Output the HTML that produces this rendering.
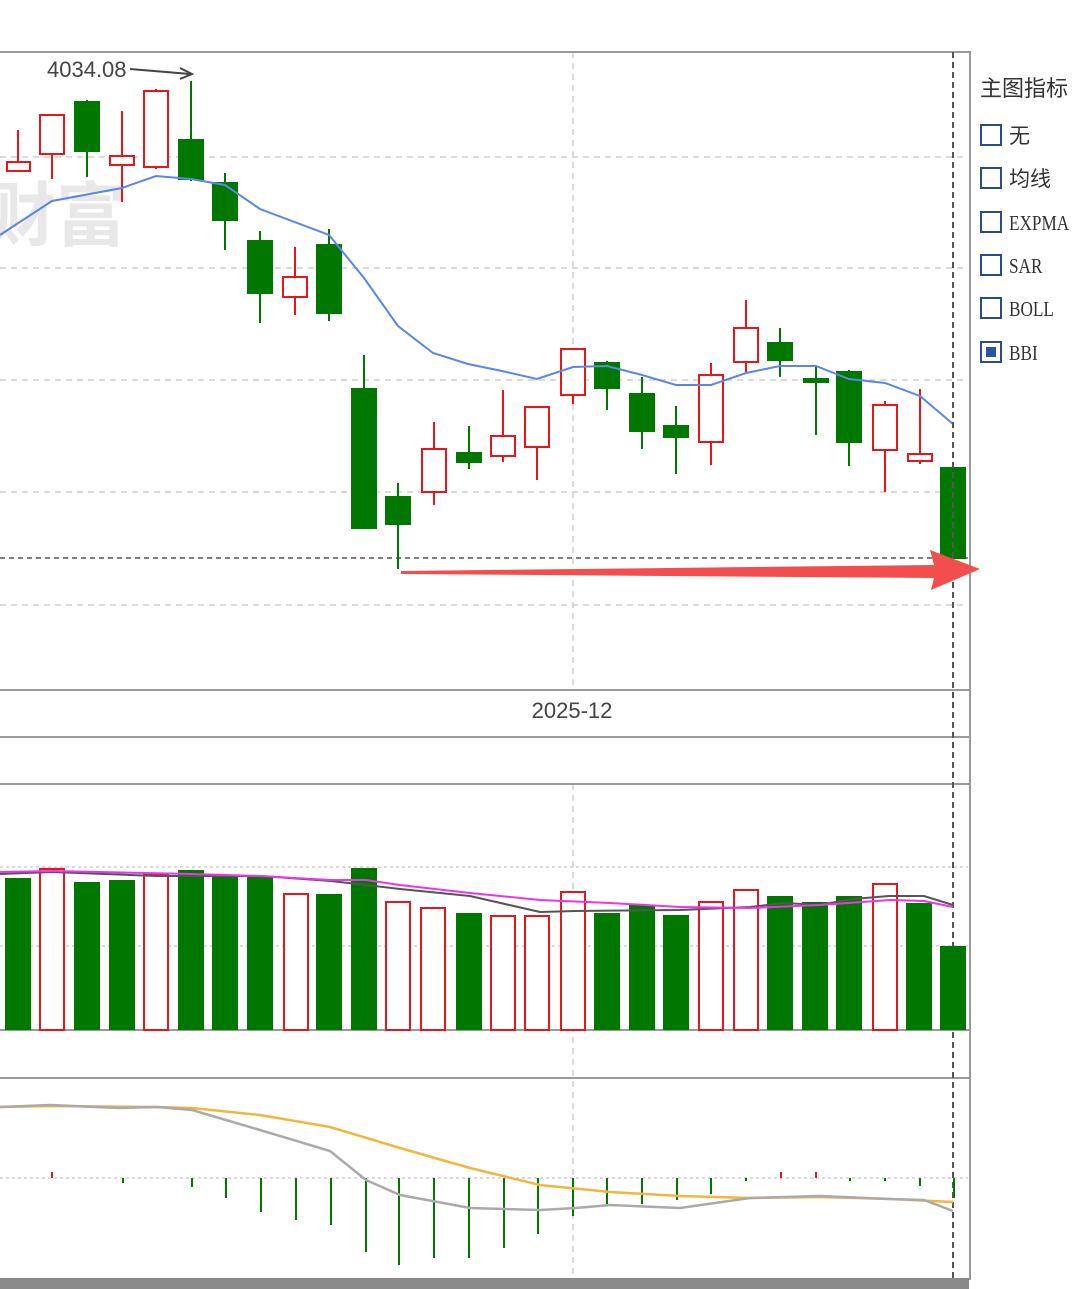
<!DOCTYPE html>
<html><head><meta charset="utf-8"><style>
html,body{margin:0;padding:0;background:#fff;width:1080px;height:1289px;overflow:hidden}
svg{display:block}
</style></head><body>
<svg width="1080" height="1289" viewBox="0 0 1080 1289" xmlns="http://www.w3.org/2000/svg">
<rect width="1080" height="1289" fill="#fff"/>
<!-- watermark -->
<text x="-14" y="240" font-family="'Liberation Sans','Noto Sans CJK SC',sans-serif" font-size="70" font-weight="bold" fill="#e8e8e8">财富</text>
<!-- grid main -->
<g stroke="#cfcfcf" stroke-width="1.5" stroke-dasharray="6,5">
<line x1="0" y1="157" x2="968" y2="157"/><line x1="0" y1="268" x2="968" y2="268"/>
<line x1="0" y1="380" x2="968" y2="380"/><line x1="0" y1="492" x2="968" y2="492"/>
<line x1="0" y1="605" x2="968" y2="605"/>
<line x1="573" y1="52" x2="573" y2="689"/><line x1="573" y1="784" x2="573" y2="1278"/>
<line x1="0" y1="867" x2="968" y2="867" stroke-dasharray="3,3"/><line x1="0" y1="946" x2="968" y2="946" stroke-dasharray="3,3"/>
<line x1="0" y1="1178" x2="968" y2="1178" stroke-dasharray="3,3"/>
</g>
<line x1="0" y1="558" x2="968" y2="558" stroke="#555" stroke-width="1.5" stroke-dasharray="5,4"/>
<!-- frames -->
<g stroke="#9a9a9a" stroke-width="2" fill="none">
<line x1="0" y1="52" x2="970" y2="52"/><line x1="970" y1="51" x2="970" y2="1280"/>
<line x1="0" y1="690" x2="970" y2="690"/><line x1="0" y1="737" x2="970" y2="737"/>
<line x1="0" y1="784" x2="970" y2="784"/><line x1="0" y1="1030" x2="970" y2="1030"/>
<line x1="0" y1="1078" x2="970" y2="1078"/>
</g>
<rect x="0" y="1278" width="969" height="11" fill="#8a8a8a"/>
<text x="572" y="718" text-anchor="middle" font-family="'Liberation Sans',sans-serif" font-size="22" fill="#444">2025-12</text>
<!-- annotation -->
<text x="47" y="77" font-family="'Liberation Sans',sans-serif" font-size="22" fill="#444">4034.08</text>
<line x1="130" y1="69" x2="190" y2="74" stroke="#444" stroke-width="2"/>
<path d="M180 68 L192 74 L180 79" fill="none" stroke="#444" stroke-width="2"/>
<!-- candles -->
<g stroke-width="2">
<g stroke="#e8161b" fill="#fff">
<line x1="18" y1="130" x2="18" y2="172"/><rect x="7" y="162" width="23" height="9"/>
<line x1="52" y1="115" x2="52" y2="179"/><rect x="40" y="115" width="24" height="39"/>
<line x1="122" y1="111" x2="122" y2="202"/><rect x="110" y="156" width="24" height="9"/>
<line x1="156" y1="89" x2="156" y2="169"/><rect x="144" y="91" width="24" height="76"/>
<line x1="295" y1="247" x2="295" y2="315"/><rect x="283" y="277" width="24" height="20"/>
<line x1="434" y1="422" x2="434" y2="505"/><rect x="422" y="449" width="24" height="43"/>
<line x1="503" y1="390" x2="503" y2="462"/><rect x="491" y="436" width="24" height="20"/>
<line x1="537" y1="407" x2="537" y2="480"/><rect x="525" y="407" width="24" height="40"/>
<line x1="573" y1="349" x2="573" y2="404"/><rect x="561" y="349" width="24" height="46"/>
<line x1="711" y1="363" x2="711" y2="465"/><rect x="699" y="375" width="24" height="67"/>
<line x1="746" y1="300" x2="746" y2="372"/><rect x="734" y="328" width="24" height="34"/>
<line x1="885" y1="401" x2="885" y2="492"/><rect x="873" y="405" width="24" height="45"/>
<line x1="920" y1="389" x2="920" y2="464"/><rect x="908" y="454" width="24" height="7"/>
</g>
<g stroke="#007800" fill="#007800">
<line x1="87" y1="100" x2="87" y2="177"/><rect x="75" y="102" width="24" height="49"/>
<line x1="191" y1="81" x2="191" y2="181"/><rect x="179" y="140" width="24" height="39"/>
<line x1="225" y1="173" x2="225" y2="250"/><rect x="213" y="183" width="24" height="37"/>
<line x1="260" y1="231" x2="260" y2="323"/><rect x="248" y="241" width="24" height="52"/>
<line x1="329" y1="229" x2="329" y2="321"/><rect x="317" y="245" width="24" height="68"/>
<line x1="364" y1="355" x2="364" y2="528"/><rect x="352" y="389" width="24" height="139"/>
<line x1="398" y1="483" x2="398" y2="569"/><rect x="386" y="497" width="24" height="27"/>
<line x1="469" y1="426" x2="469" y2="469"/><rect x="457" y="453" width="24" height="9"/>
<line x1="607" y1="361" x2="607" y2="410"/><rect x="595" y="363" width="24" height="25"/>
<line x1="642" y1="377" x2="642" y2="449"/><rect x="630" y="394" width="24" height="37"/>
<line x1="676" y1="406" x2="676" y2="474"/><rect x="664" y="426" width="24" height="11"/>
<line x1="780" y1="328" x2="780" y2="377"/><rect x="768" y="343" width="24" height="17"/>
<line x1="816" y1="367" x2="816" y2="435"/><rect x="804" y="379" width="24" height="3"/>
<line x1="849" y1="370" x2="849" y2="466"/><rect x="837" y="372" width="24" height="70"/>
<rect x="941" y="468" width="24" height="90"/>
</g>
</g>
<!-- BBI -->
<polyline fill="none" stroke="#5b86e6" stroke-width="2" points="0,235 52,201 122,188 156,176 191,179 225,185 260,209 329,235 364,278 398,326 433,353 468,364 502,371 537,379 573,367 607,366 642,375 676,385 711,385 746,373 780,366 816,366 849,379 885,383 920,396 953,424"/>
<!-- crosshair -->
<line x1="953" y1="52" x2="953" y2="1278" stroke="#555" stroke-width="2" stroke-dasharray="6,4"/>
<!-- red arrow -->
<polygon fill="#f24e4e" points="401,571 934,565 930,550 980,569 931,590 934,578 401,574"/>
<!-- volume bars -->
<g stroke-width="2">
<g fill="#007800">
<rect x="5" y="878" width="26" height="152"/><rect x="74" y="882" width="26" height="148"/>
<rect x="109" y="880" width="26" height="150"/><rect x="178" y="870" width="26" height="160"/>
<rect x="212" y="876" width="26" height="154"/><rect x="247" y="876" width="26" height="154"/>
<rect x="316" y="894" width="26" height="136"/><rect x="351" y="868" width="26" height="162"/>
<rect x="456" y="913" width="26" height="117"/><rect x="594" y="913" width="26" height="117"/>
<rect x="629" y="905" width="26" height="125"/><rect x="663" y="915" width="26" height="115"/>
<rect x="767" y="896" width="26" height="134"/><rect x="802" y="902" width="26" height="128"/>
<rect x="836" y="896" width="26" height="134"/><rect x="906" y="903" width="26" height="127"/>
<rect x="940" y="946" width="26" height="84"/>
</g>
<g fill="#fff" stroke="#e8161b">
<rect x="40" y="869" width="24" height="161"/><rect x="144" y="874" width="24" height="156"/>
<rect x="284" y="894" width="24" height="136"/><rect x="386" y="902" width="24" height="128"/>
<rect x="421" y="908" width="24" height="122"/><rect x="491" y="916" width="24" height="114"/>
<rect x="525" y="916" width="24" height="114"/><rect x="561" y="892" width="24" height="138"/>
<rect x="699" y="902" width="24" height="128"/><rect x="734" y="890" width="24" height="140"/>
<rect x="873" y="884" width="24" height="146"/>
</g>
</g>
<polyline fill="none" stroke="#555" stroke-width="2" points="0,874 52,872 157,876 226,876 261,876 331,881 366,885 400,889 470,896 540,912 576,911 680,910 750,907 784,903 819,905 853,899 889,896 924,896 953,905"/>
<polyline fill="none" stroke="#ee33ee" stroke-width="2" points="0,872 52,871 192,874 260,876 330,880 366,880 400,885 470,893 540,900 610,903 680,907 750,908 820,905 890,900 924,901 953,907"/>
<!-- MACD hist -->
<g stroke="#007800" stroke-width="2">
<line x1="123" y1="1178" x2="123" y2="1183"/><line x1="192" y1="1178" x2="192" y2="1187"/>
<line x1="226" y1="1178" x2="226" y2="1198"/><line x1="261" y1="1178" x2="261" y2="1212"/>
<line x1="296" y1="1178" x2="296" y2="1220"/><line x1="331" y1="1178" x2="331" y2="1225"/>
<line x1="366" y1="1178" x2="366" y2="1252"/><line x1="399" y1="1178" x2="399" y2="1265"/>
<line x1="434" y1="1178" x2="434" y2="1258"/><line x1="469" y1="1178" x2="469" y2="1258"/>
<line x1="504" y1="1178" x2="504" y2="1248"/><line x1="538" y1="1178" x2="538" y2="1234"/>
<line x1="573" y1="1178" x2="573" y2="1216"/><line x1="607" y1="1178" x2="607" y2="1206"/>
<line x1="642" y1="1178" x2="642" y2="1204"/><line x1="677" y1="1178" x2="677" y2="1200"/>
<line x1="711" y1="1178" x2="711" y2="1194"/><line x1="746" y1="1178" x2="746" y2="1181"/>
<line x1="850" y1="1178" x2="850" y2="1181"/><line x1="885" y1="1178" x2="885" y2="1181"/>
<line x1="920" y1="1178" x2="920" y2="1186"/><line x1="954" y1="1178" x2="954" y2="1198"/>
</g>
<g stroke="#e8161b" stroke-width="2">
<line x1="52" y1="1172" x2="52" y2="1178"/><line x1="781" y1="1172" x2="781" y2="1178"/><line x1="816" y1="1172" x2="816" y2="1178"/>
</g>
<polyline fill="none" stroke="#f2b640" stroke-width="2.5" points="0,1107 50,1106 157,1107 192,1108 260,1115 330,1127 400,1148 470,1168 540,1185 610,1192 680,1196 750,1198 820,1197 890,1199 953,1202"/>
<polyline fill="none" stroke="#aaa" stroke-width="2.5" points="0,1107 50,1105 120,1108 157,1107 192,1110 260,1130 330,1151 366,1180 400,1195 470,1208 540,1210 576,1208 610,1205 680,1208 750,1198 820,1196 890,1199 924,1200 953,1211"/>
<!-- right panel -->
<text x="980" y="96" font-family="'Liberation Sans','Noto Sans CJK SC',sans-serif" font-size="22" fill="#333">主图指标</text>
<g fill="#fff" stroke="#2a4d8a" stroke-width="2">
<rect x="981" y="125" width="20" height="20"/><rect x="981" y="168" width="20" height="20"/>
<rect x="981" y="212" width="20" height="20"/><rect x="981" y="255" width="20" height="20"/>
<rect x="981" y="298" width="20" height="20"/><rect x="981" y="342" width="20" height="20"/>
</g>
<rect x="986" y="347" width="10" height="10" fill="#2a5599"/>
<text x="1009" y="143" font-family="'Liberation Sans','Noto Sans CJK SC',sans-serif" font-size="21" fill="#333">无</text>
<text x="1009" y="186" font-family="'Liberation Sans','Noto Sans CJK SC',sans-serif" font-size="21" fill="#333">均线</text>
<g font-family="'Liberation Serif',serif" font-size="21" fill="#333" transform="translate(1009 0) scale(0.82 1) translate(-1009 0)">
<text x="1009" y="230">EXPMA</text>
<text x="1009" y="273">SAR</text>
<text x="1009" y="316">BOLL</text>
<text x="1009" y="360">BBI</text>
</g>
</svg>
</body></html>
